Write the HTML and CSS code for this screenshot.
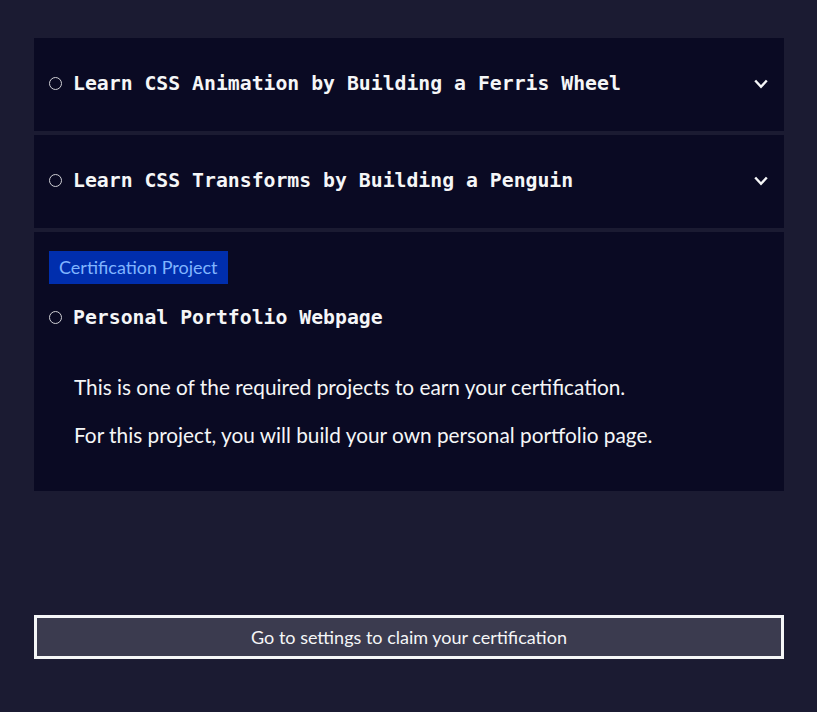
FILE: index.html
```html
<!DOCTYPE html>
<html>
<head>
<meta charset="utf-8">
<link rel="stylesheet" href="styles.css">
</head>
<body>
<main class="page">
  <section class="block">
    <div class="block-head">
      <span class="dot"></span>
      <h3 class="title">Learn CSS Animation by Building a Ferris Wheel</h3>
      <svg class="chev" width="14" height="10" viewBox="0 0 14 10"><path d="M1.2 1.5 L7 7.8 L12.8 1.5" fill="none" stroke="#f5f6f7" stroke-width="2.4"/></svg>
    </div>
  </section>
  <section class="block">
    <div class="block-head">
      <span class="dot"></span>
      <h3 class="title">Learn CSS Transforms by Building a Penguin</h3>
      <svg class="chev" width="14" height="10" viewBox="0 0 14 10"><path d="M1.2 1.5 L7 7.8 L12.8 1.5" fill="none" stroke="#f5f6f7" stroke-width="2.4"/></svg>
    </div>
  </section>
  <section class="block project">
    <span class="badge">Certification Project</span>
    <div class="proj-head">
      <span class="dot"></span>
      <h3 class="title">Personal Portfolio Webpage</h3>
    </div>
    <div class="desc">
      <p>This is one of the required projects to earn your certification.</p>
      <p>For this project, you will build your own personal portfolio page.</p>
    </div>
  </section>
  <button class="claim">Go to settings to claim your certification</button>
</main>
</body>
</html>
```

FILE: styles.css
```css
html, body {
  margin: 0;
  padding: 0;
  background: #1b1b32;
  color: #f5f6f7;
  font-family: Lato, "Open Sans", sans-serif;
}
.page {
  padding: 38px 33px 0 34px;
  display: flex;
  flex-direction: column;
}
.block {
  background: #0a0a23;
  margin-bottom: 4px;
}
.block-head {
  display: flex;
  align-items: center;
  padding: 32px 16px 34px 15px;
  height: 27px;
}
.dot {
  width: 11px;
  height: 11px;
  border: 1px solid #d0d0d5;
  border-radius: 50%;
  flex: none;
  margin-right: 11px;
}
.title {
  margin: 0;
  font-family: "DejaVu Sans Mono", "Liberation Mono", monospace;
  font-weight: bold;
  font-size: 19.8px;
  line-height: 27px;
  flex: 1;
  color: #f5f6f7;
}
.chev {
  flex: none;
}
.project {
  padding: 19px 15px 41px 15px;
  display: flex;
  flex-direction: column;
  align-items: flex-start;
}
.badge {
  display: block;
  background: #002ead;
  color: #80b5ff;
  font-size: 18px;
  line-height: 33px;
  height: 33px;
  padding: 0 10px;
}
.proj-head {
  display: flex;
  align-items: center;
  margin-top: 20px;
}
.desc {
  padding-left: 25px;
  margin-top: 40px;
}
.desc p {
  margin: 0 0 17px 0;
  font-size: 20.8px;
  line-height: 31px;
}
.desc p:last-child {
  margin-bottom: 0;
}
.claim {
  margin-top: 120px;
  height: 44px;
  background: #3b3b4f;
  border: 3px solid #f5f6f7;
  color: #f5f6f7;
  font-family: Lato, sans-serif;
  font-size: 18px;
  padding: 0;
}
```
